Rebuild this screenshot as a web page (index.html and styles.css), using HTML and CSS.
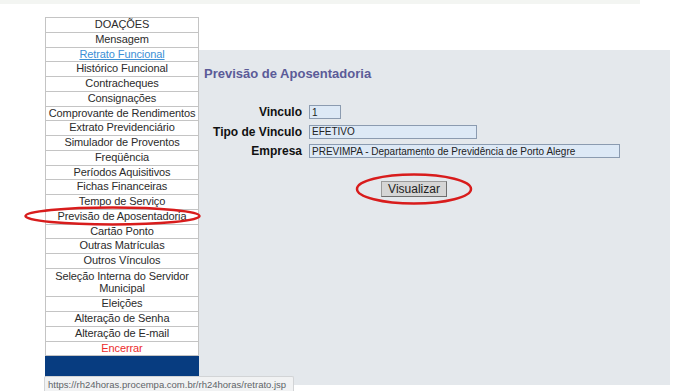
FILE: index.html
```html
<!DOCTYPE html>
<html lang="pt-BR">
<head>
    <meta charset="UTF-8">
    <meta name="viewport" content="width=device-width, initial-scale=1.0">
    <title>Previsão de Aposentadoria</title>
    <link rel="stylesheet" href="styles.css">
</head>
<body>

<div class="topband"></div>

<div class="page">
    <div class="sidebar">
        <ul class="menu">
            <li>DOAÇÕES</li>
            <li>Mensagem</li>
            <li><a href="#">Retrato Funcional</a></li>
            <li>Histórico Funcional</li>
            <li>Contracheques</li>
            <li>Consignações</li>
            <li>Comprovante de Rendimentos</li>
            <li>Extrato Previdenciário</li>
            <li>Simulador de Proventos</li>
            <li>Freqüência</li>
            <li>Períodos Aquisitivos</li>
            <li>Fichas Financeiras</li>
            <li>Tempo de Serviço</li>
            <li>Previsão de Aposentadoria</li>
            <li>Cartão Ponto</li>
            <li>Outras Matrículas</li>
            <li>Outros Vínculos</li>
            <li class="wrap">Seleção Interna do Servidor Municipal</li>
            <li>Eleições</li>
            <li>Alteração de Senha</li>
            <li>Alteração de E-mail</li>
            <li class="logout">Encerrar</li>
        </ul>
        <div class="menu-foot"></div>
    </div>

    <div class="panel">
        <h1 class="title">Previsão de Aposentadoria</h1>
        <div class="form">
            <div class="fields">
                <label>Vinculo</label>
                <input type="text" class="w-small" value="1" readonly>
                <label>Tipo de Vinculo</label>
                <input type="text" class="w-mid" value="EFETIVO" readonly>
                <label>Empresa</label>
                <input type="text" class="w-big" value="PREVIMPA - Departamento de Previdência de Porto Alegre" readonly>
            </div>
            <div class="actions">
                <button type="button">Visualizar</button>
            </div>
        </div>
    </div>
</div>

<div class="status">https://rh24horas.procempa.com.br/rh24horas/retrato.jsp</div>

<!-- marcas vermelhas feitas à mão sobre a captura -->
<svg class="marks" width="684" height="391" viewBox="0 0 684 391">
    <ellipse cx="112.5" cy="216" rx="87" ry="8.5" fill="none" stroke="#d81c1c" stroke-width="2.5"/>
    <ellipse cx="414" cy="189" rx="57" ry="14.5" fill="none" stroke="#d81c1c" stroke-width="2.5"/>
</svg>

</body>
</html>
```

FILE: styles.css
```css
body {
    margin: 0;
    background: #fff;
    font-family: "Liberation Sans", Arial, sans-serif;
    position: relative;
    height: 391px;
    overflow: hidden;
}
.topband {
    width: 640px;
    height: 4px;
    background: #f3f5f2;
}
.page {
    display: flex;
    align-items: flex-start;
    padding-left: 45px;
}
.sidebar {
    width: 154px;
    margin-top: 13px;
}
.menu {
    list-style: none;
    margin: 0;
    padding: 0;
    border: 1px solid #c4c4c4;
    border-bottom: none;
    background: #fff;
}
.menu li {
    font-size: 11px;
    line-height: 13.75px;
    text-align: center;
    color: #2b2b2b;
    border-bottom: 1px solid #c4c4c4;
    white-space: nowrap;
    letter-spacing: -0.1px;
}
.menu li.wrap {
    white-space: normal;
    line-height: 12.5px;
    padding: 1px 4px 1.5px;
}
.menu a {
    color: #3b8fd6;
}
.menu .logout {
    color: #ec2b2b;
}
.menu-foot {
    height: 21px;
    background: #073c80;
}
.panel {
    width: 471px;
    height: 335px;
    margin-top: 46px;
    background: #e4e8ec;
    padding: 0 5px;
    box-sizing: border-box;
}
.title {
    margin: 16px 0 0;
    font-size: 13px;
    line-height: 16px;
    color: #5b5b98;
}
.form {
    width: 412px;
    margin: 23px 0 0 4px;
}
.fields {
    display: grid;
    grid-template-columns: 94px 1fr;
    column-gap: 7px;
    row-gap: 5.5px;
    align-items: center;
}
.fields label {
    text-align: right;
    font-size: 12px;
    font-weight: bold;
    line-height: 14px;
    color: #111;
}
.fields input {
    height: 14px;
    box-sizing: border-box;
    padding: 0 2px;
    border: 1px solid #8b9bb0;
    background: #dde9f6;
    font-family: "Liberation Sans", Arial, sans-serif;
    font-size: 10px;
    color: #222;
}
.w-small { width: 32px; }
.w-mid { width: 168px; }
.w-big { width: 311px; }
.actions {
    margin-top: 23px;
    display: flex;
    justify-content: center;
}
.actions button {
    width: 66px;
    height: 16px;
    padding: 0;
    background: #d5d5d5;
    border: 1px solid #6e6e6e;
    border-top-color: #9a9a9a;
    border-left-color: #9a9a9a;
    font-family: "Liberation Sans", Arial, sans-serif;
    font-size: 12px;
    line-height: 14px;
    color: #222;
}
.status {
    position: absolute;
    left: 44px;
    top: 376px;
    width: 250px;
    height: 15px;
    box-sizing: border-box;
    padding: 2px 0 0 3px;
    background: #f1f2f3;
    border: 1px solid #d2d4d6;
    border-bottom: none;
    border-radius: 2px 2px 0 0;
    font-size: 9.5px;
    line-height: 12px;
    color: #606468;
    white-space: nowrap;
    overflow: hidden;
}
.marks {
    position: absolute;
    left: 0;
    top: 0;
    pointer-events: none;
}
```
